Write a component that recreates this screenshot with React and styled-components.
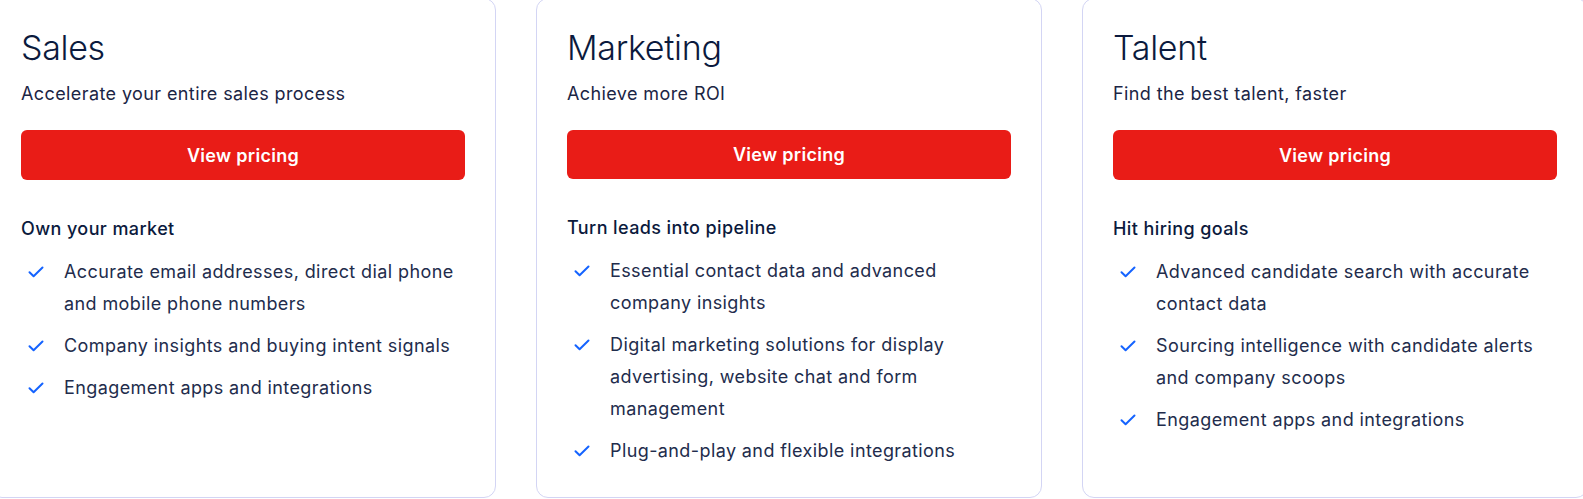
import React from "react";
import styled, { createGlobalStyle } from "styled-components";

const GlobalStyle = createGlobalStyle`
    html, body {
        margin: 0;
        padding: 0;
        background: #ffffff;
        overflow: hidden;
    }
    body {
        font-family: Inter, "Noto Sans", sans-serif;
        -webkit-font-smoothing: antialiased;
    }
`;

const Row = styled.div`
    display: flex;
    gap: 40px;
    margin: -2px 0 0 -10px;
    width: max-content;
`;

const Card = styled.div`
    box-sizing: border-box;
    width: 506px;
    height: 500px;
    padding: 28px 30px 30px;
    border: 1px solid #d3d5f4;
    border-radius: 12px;
    background: #ffffff;
    display: flex;
    flex-direction: column;
`;

const Title = styled.h2`
    margin: 0;
    font-size: 34px;
    line-height: 41px;
    font-weight: 300;
    color: #0b1a3d;
    letter-spacing: -0.3px;
`;

const Subtitle = styled.p`
    margin: 12px 0 0;
    font-size: 18px;
    line-height: 28px;
    font-weight: 400;
    letter-spacing: 0.4px;
    color: #1b2545;
`;

const Button = styled.button`
    margin-top: 22px;
    height: 50px;
    width: 100%;
    border: none;
    border-radius: 6px;
    background-color: #e91c17;
    color: #ffffff;
    font-family: inherit;
    font-size: 18px;
    font-weight: 600;
    letter-spacing: 0.3px;
    cursor: pointer;
    &:hover {
        background-color: #cf1510;
    }
`;

const Heading = styled.h3`
    margin: 35px 0 0;
    font-size: 18px;
    line-height: 28px;
    font-weight: 500;
    letter-spacing: 0.4px;
    color: #0b1a3d;
`;

const List = styled.ul`
    list-style: none;
    margin: 13px 0 0;
    padding: 0;
    display: flex;
    flex-direction: column;
    gap: 10px;
`;

const Item = styled.li`
    display: flex;
    align-items: flex-start;
    font-size: 18px;
    line-height: 32px;
    letter-spacing: 0.4px;
    color: #222c4c;
`;

const CheckBox = styled.span`
    flex: none;
    display: flex;
    align-items: center;
    height: 32px;
    margin-left: 7px;
    margin-right: 20px;
`;

const Check = () => (
    <CheckBox>
        <svg width="16" height="12" viewBox="0 0 16 12" fill="none">
            <path d="M1.5 6.2L5.6 10.2L14.5 1.5" stroke="#1463ff" strokeWidth="2" strokeLinecap="round" strokeLinejoin="round" />
        </svg>
    </CheckBox>
);

const plans = [
    {
        title: "Sales",
        subtitle: "Accelerate your entire sales process",
        heading: "Own your market",
        items: [
            "Accurate email addresses, direct dial phone and mobile phone numbers",
            "Company insights and buying intent signals",
            "Engagement apps and integrations",
        ],
    },
    {
        title: "Marketing",
        subtitle: "Achieve more ROI",
        heading: "Turn leads into pipeline",
        items: [
            "Essential contact data and advanced company insights",
            "Digital marketing solutions for display advertising, website chat and form management",
            "Plug-and-play and flexible integrations",
        ],
    },
    {
        title: "Talent",
        subtitle: "Find the best talent, faster",
        heading: "Hit hiring goals",
        items: [
            "Advanced candidate search with accurate contact data",
            "Sourcing intelligence with candidate alerts and company scoops",
            "Engagement apps and integrations",
        ],
    },
];

const App = () => {
    return (
        <>
            <GlobalStyle />
            <Row>
                {plans.map((plan) => (
                    <Card key={plan.title}>
                        <Title>{plan.title}</Title>
                        <Subtitle>{plan.subtitle}</Subtitle>
                        <Button type="button">View pricing</Button>
                        <Heading>{plan.heading}</Heading>
                        <List>
                            {plan.items.map((item) => (
                                <Item key={item}>
                                    <Check />
                                    <span>{item}</span>
                                </Item>
                            ))}
                        </List>
                    </Card>
                ))}
            </Row>
        </>
    );
};

export default App;
